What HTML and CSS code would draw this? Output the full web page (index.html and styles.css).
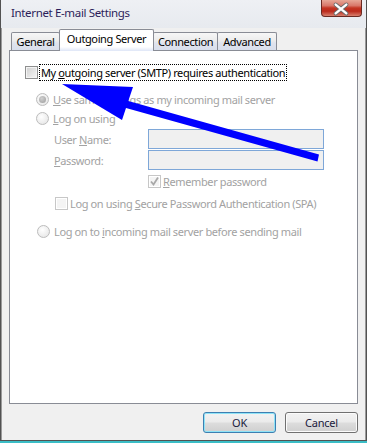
FILE: index.html
```html
<!DOCTYPE html>
<html>
<head>
<meta charset="utf-8">
<link rel="stylesheet" href="styles.css">
</head>
<body>
<div class="window">
  <div class="titlebar">
    <span class="title">Internet E-mail Settings</span>
    <div class="close">
      <svg width="41" height="17" viewBox="0 0 41 17">
        <path d="M15 4.5 L26 13.5 M26 4.5 L15 13.5" stroke="#6b6b6b" stroke-width="4.2" stroke-linecap="round"/>
        <path d="M15 4.5 L26 13.5 M26 4.5 L15 13.5" stroke="#ffffff" stroke-width="2.4" stroke-linecap="round"/>
      </svg>
    </div>
  </div>
  <div class="content">
    <div class="tabs">
      <div class="tab t-general">General</div>
      <div class="tab t-outgoing active">Outgoing Server</div>
      <div class="tab t-connection">Connection</div>
      <div class="tab t-advanced">Advanced</div>
    </div>
    <div class="panel">
      <div class="row row-auth">
        <span class="cb"></span>
        <span class="focus">My <u>o</u>utgoing server (SMTP) requires authentication</span>
      </div>
      <div class="row row-same dis">
        <span class="rb checked"></span>
        <span class="lbl"><u>U</u>se same settings as my incoming mail server</span>
      </div>
      <div class="row row-logon dis">
        <span class="rb"></span>
        <span class="lbl"><u>L</u>og on using</span>
      </div>
      <div class="fields dis">
        <div class="field">
          <span class="flabel">User <u>N</u>ame:</span>
          <span class="input"></span>
        </div>
        <div class="field">
          <span class="flabel"><u>P</u>assword:</span>
          <span class="input"></span>
        </div>
      </div>
      <div class="row row-remember dis">
        <span class="cb dcb checked"><svg width="11" height="11" viewBox="0 0 11 11"><path d="M2 5.5 L4.5 8.5 L9 1.5" fill="none" stroke="#a8a8a8" stroke-width="1.8"/></svg></span>
        <span class="lbl"><u>R</u>emember password</span>
      </div>
      <div class="row row-spa dis">
        <span class="cb dcb"></span>
        <span class="lbl">Log on using <u>S</u>ecure Password Authentication (SPA)</span>
      </div>
      <div class="row row-incoming dis">
        <span class="rb"></span>
        <span class="lbl">Log on to <u>i</u>ncoming mail server before sending mail</span>
      </div>
    </div>
    <div class="buttons">
      <button class="btn default">OK</button>
      <button class="btn">Cancel</button>
    </div>
  </div>
  <svg class="arrow" width="367" height="443" viewBox="0 0 367 443">
    <polygon points="62,84 133,87 128.3,101 319,154.5 317.5,161.5 126,108 122,120" fill="#0000ff"/>
  </svg>
</div>
</body>
</html>
```
FILE: styles.css
```css
html, body {
  margin: 0;
  padding: 0;
  background: #3bbdc6;
}
body {
  width: 367px;
  height: 443px;
  overflow: hidden;
  font-family: "Noto Sans", "Open Sans", sans-serif;
  font-size: 11px;
  letter-spacing: -0.38px;
}
.window {
  position: relative;
  width: 367px;
  height: 441px;
  box-sizing: border-box;
  background: #f0f0f0;
  border: 1px solid #525252;
  border-top: none;
  box-shadow: inset 1px 0 0 #9a9a9a, inset -1px 0 0 #9a9a9a;
}
.titlebar {
  height: 28px;
  display: flex;
  align-items: center;
  justify-content: space-between;
  padding-left: 10px;
  background: linear-gradient(#eef0f4, #e7eaef);
}
.title {
  color: #2b1d5a;
  font-size: 11.5px;
  letter-spacing: -0.35px;
  margin-top: -3px;
}
.close {
  align-self: flex-start;
  width: 41px;
  height: 17px;
  margin-right: 4px;
  box-sizing: border-box;
  border: 1px solid #6a2a22;
  border-top: none;
  border-radius: 0 0 4px 4px;
  background: linear-gradient(#e7a897 0%, #d9786a 35%, #c43522 50%, #bb2a1c 70%, #d8806e 100%);
  display: flex;
}
.close svg { display: block; margin-left: -1px; }
.content {
  padding: 1px 8px 0 8px;
}
.tabs {
  display: flex;
  align-items: flex-end;
  height: 21px;
  padding-left: 2px;
  position: relative;
  z-index: 2;
}
.tab {
  box-sizing: border-box;
  height: 18px;
  border: 1px solid #898c95;
  border-bottom: none;
  border-radius: 2px 2px 0 0;
  background: linear-gradient(#f7f7f7, #ececec 45%, #dfe3ee 60%, #d9dfec);
  color: #000;
  font-size: 11px;
  display: flex;
  align-items: center;
  justify-content: center;
  margin-right: -1px;
}
.t-general { width: 49px; }
.t-outgoing { width: 95px; }
.t-connection { width: 65px; }
.t-advanced { width: 60px; }
.tab.active {
  height: 22px;
  margin-bottom: -1px;
  background: linear-gradient(#ffffff 80%, #dfe6f7);
  align-items: flex-start;
  padding-top: 1px;
  position: relative;
  z-index: 3;
}
.panel {
  position: relative;
  z-index: 1;
  box-sizing: border-box;
  height: 354px;
  border: 1px solid #898c95;
  background: #fff;
  padding: 13px 0 0 15px;
  display: flex;
  flex-direction: column;
  align-items: flex-start;
}
.row {
  display: flex;
  align-items: center;
  height: 17px;
}
.dis { color: #a2a2a2; }
.cb {
  box-sizing: border-box;
  width: 13px;
  height: 13px;
  border: 1px solid #8e8f8f;
  background: linear-gradient(135deg, #cfcfcf, #f6f6f6);
  box-shadow: inset 0 0 0 1px #f4f4f4;
  display: flex;
  align-items: center;
  justify-content: center;
}
.dcb {
  border-color: #c7c7c7;
  background: #f4f4f4;
  box-shadow: inset 0 0 0 1px #ffffff;
}
.focus {
  margin-left: 2px;
  padding: 0 1px;
  height: 15px;
  line-height: 15px;
  outline: 1px dotted #000;
  outline-offset: 0;
  color: #000;
}
.rb {
  box-sizing: border-box;
  width: 13px;
  height: 13px;
  border-radius: 50%;
  border: 1px solid #bcbcbc;
  background: radial-gradient(circle at 40% 35%, #ffffff, #e2e2e2);
  display: flex;
  align-items: center;
  justify-content: center;
}
.rb.checked::after {
  content: "";
  width: 7px;
  height: 7px;
  border-radius: 50%;
  background: radial-gradient(circle at 40% 35%, #d0d0d0, #9c9c9c);
}
.lbl { margin-left: 4px; }
.row-same { margin: 10px 0 0 11px; }
.row-logon { margin: 2px 0 0 11px; }
.fields {
  margin: 2px 0 0 29px;
  display: flex;
  flex-direction: column;
  gap: 1px;
}
.field {
  display: flex;
  align-items: center;
  height: 20px;
}
.flabel { width: 94px; }
.input {
  box-sizing: border-box;
  width: 176px;
  height: 20px;
  border: 1px solid #7ea7d8;
  background: #f0f0f0;
}
.row-remember { margin: 3px 0 0 123px; }
.row-remember .lbl { margin-left: 2px; }
.row-spa { margin: 5px 0 0 30px; }
.row-spa .lbl { margin-left: 2px; }
.row-incoming { margin: 11px 0 0 12px; }
.buttons {
  display: flex;
  justify-content: flex-end;
  gap: 9px;
  margin-top: 8px;
}
.btn {
  box-sizing: border-box;
  width: 73px;
  height: 21px;
  border: 1px solid #707070;
  border-radius: 3px;
  background: linear-gradient(#f2f2f2 0%, #ebebeb 48%, #dddddd 52%, #cfcfcf 100%);
  box-shadow: inset 0 0 0 1px #fbfbfb;
  font-family: "Noto Sans", "Open Sans", sans-serif;
  font-size: 11px;
  letter-spacing: -0.2px;
  color: #1a1a3c;
  padding: 0;
}
.btn.default {
  border-color: #3c7fb1;
  box-shadow: inset 0 0 0 1px #8fe3f7;
}
.arrow {
  position: absolute;
  left: -1px;
  top: 0;
  pointer-events: none;
  z-index: 10;
}
```
